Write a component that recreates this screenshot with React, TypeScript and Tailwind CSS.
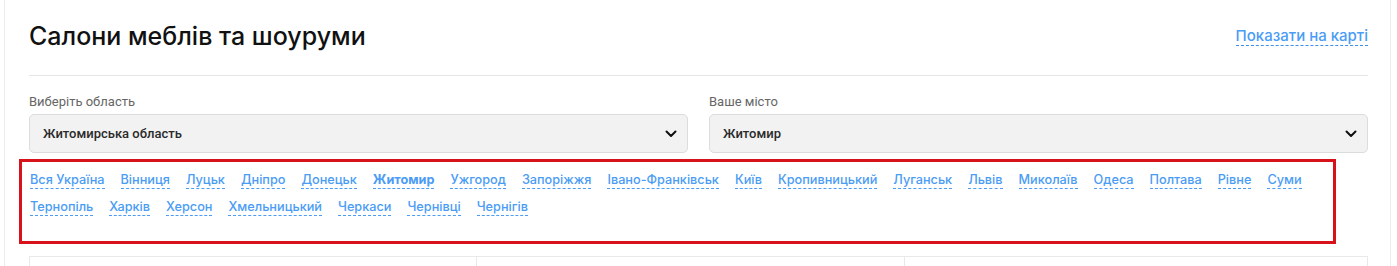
const regions = ["Житомирська область"];
const cities = ["Житомир"];

const links = [
  "Вся Україна",
  "Вінниця",
  "Луцьк",
  "Дніпро",
  "Донецьк",
  "Житомир",
  "Ужгород",
  "Запоріжжя",
  "Івано-Франківськ",
  "Київ",
  "Кропивницький",
  "Луганськ",
  "Львів",
  "Миколаїв",
  "Одеса",
  "Полтава",
  "Рівне",
  "Суми",
  "Тернопіль",
  "Харків",
  "Херсон",
  "Хмельницький",
  "Черкаси",
  "Чернівці",
  "Чернігів",
];

function Chevron() {
  return (
    <svg width="12" height="8" viewBox="0 0 12 8" fill="none">
      <path d="M1.5 1.5L6 6L10.5 1.5" stroke="#111" strokeWidth="2" strokeLinecap="round" strokeLinejoin="round" />
    </svg>
  );
}

function SelectBox({ label, value }: { label: string; value: string }) {
  return (
    <div className="w-[659px]">
      <div className="mb-[4px] text-[13px] leading-[16px] text-[#666] [font-family:Roboto,sans-serif]">{label}</div>
      <div className="flex h-[39px] items-center justify-between rounded-[5px] border border-[#dcdcdc] bg-[#f2f2f2] pl-[13px] pr-[10px]">
        <span className="text-[13px] font-medium text-[#2a2a2a] [font-family:Roboto,sans-serif]">{value}</span>
        <Chevron />
      </div>
    </div>
  );
}

export default function App() {
  return (
    <div className="min-h-[266px] bg-white [font-family:Inter,sans-serif]">
      <div className="ml-[4px] w-[1387px] border-x border-[#ececec] pl-[24px] pr-[22px]">
        <div className="flex items-center justify-between border-b border-[#e6e6e6] pt-[20px] pb-[23px]">
          <h1 className="text-[25px] leading-[32px] font-medium text-[#111]">Салони меблів та шоуруми</h1>
          <a className="border-b border-dashed border-[#3d8fe8] text-[15px] leading-[18px] font-medium text-[#4a9cf5]">
            Показати на карті
          </a>
        </div>

        <div className="flex gap-[21px] pt-[18px]">
          <SelectBox label="Виберіть область" value={regions[0]} />
          <SelectBox label="Ваше місто" value={cities[0]} />
        </div>

        <div className="mt-[6px] -ml-[10px] h-[85px] w-[1317px] border-[3px] border-[#d7121b] pt-[10px] pl-[8px]">
          <div className="flex flex-wrap gap-x-[16px] gap-y-[10px]">
            {links.map((l) => (
              <span
                key={l}
                className={
                  "border-b border-dashed border-[#4a9cf5] text-[12.7px] leading-[16px] text-[#4a9cf5] " +
                  (l === "Житомир" ? "font-bold text-[#3d8fe8]" : "font-medium")
                }
              >
                {l}
              </span>
            ))}
          </div>
        </div>

        <div className="mt-[12px] grid h-[40px] grid-cols-[447px_428px_1fr] border border-[#e9e9e9]">
          <div className="border-r border-[#e9e9e9]" />
          <div className="border-r border-[#e9e9e9]" />
          <div />
        </div>
      </div>
    </div>
  );
}
